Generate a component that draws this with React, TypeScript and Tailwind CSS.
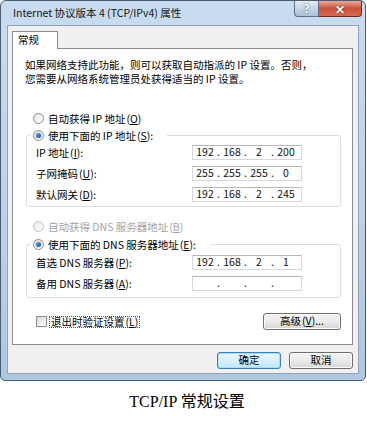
const UI_FONT = "font-['Noto_Sans_CJK_SC','Noto_Sans',sans-serif]";

function Radio({ checked = false, disabled = false }: { checked?: boolean; disabled?: boolean }) {
  return (
    <span
      className={
        "relative flex h-[11px] w-[11px] shrink-0 items-center justify-center rounded-full border bg-gradient-to-br from-[#e6e6e6] to-[#ffffff] " +
        (disabled ? "border-[#c4c4c4]" : "border-[#8a8a8a]")
      }
    >
      {checked && (
        <span className="h-[5px] w-[5px] rounded-full bg-gradient-to-br from-[#5fa2e4] to-[#1a56a6] shadow-[0_0_1px_#0b3d7a]" />
      )}
    </span>
  );
}

function Mn({ k }: { k: string }) {
  return (
    <span className="ml-[1px]">
      (<span className="underline underline-offset-1">{k}</span>)
    </span>
  );
}

function IpBox({ parts }: { parts: [string, string, string, string] }) {
  return (
    <div className="flex h-[15px] w-[110px] items-center border border-[#d4d8de] border-t-[#b4b8be] bg-white pl-[1px] text-[10.5px] leading-none text-[#111]">
      {parts.map((p, i) => (
        <div key={i} className="flex items-center">
          <span className="w-[22px] text-center">{p}</span>
          {i < 3 && <span className="w-[5px] text-center">.</span>}
        </div>
      ))}
    </div>
  );
}

function Row({ label, parts }: { label: React.ReactNode; parts: [string, string, string, string] }) {
  return (
    <div className="flex h-[15px] items-center">
      <div className="ml-[5px] w-[156px] whitespace-nowrap">{label}</div>
      <IpBox parts={parts} />
    </div>
  );
}

function WinButton({ children, primary = false, className = "" }: { children: React.ReactNode; primary?: boolean; className?: string }) {
  return (
    <button
      className={
        "flex h-[17px] items-center justify-center rounded-[3px] border text-[10.5px] leading-none text-black " +
        (primary
          ? "border-[#3c7fb1] bg-gradient-to-b from-[#eaf6fd] via-[#d9f0fc] to-[#bee6fd] shadow-[inset_0_0_0_1px_#a9dcf6] "
          : "border-[#707070] bg-gradient-to-b from-[#f2f2f2] via-[#ebebeb] to-[#d6d6d6] shadow-[inset_0_0_0_1px_#fcfcfc] ") +
        className
      }
    >
      {children}
    </button>
  );
}

export default function App() {
  return (
    <div className={"h-[422px] w-[367px] bg-white " + UI_FONT}>
      {/* dialog window */}
      <div className="relative flex h-[381px] w-[366px] flex-col rounded-t-[6px] rounded-b-[5px] border border-[#4d5d70] bg-gradient-to-b from-[#c9dcef] via-[#bcd3ea] to-[#aec8e3] px-[6px] pb-[6px]">
        <div className="flex h-[24px] items-center pl-[6px] text-[10.5px] leading-none text-[#141414]">
          Internet 协议版本 4 (TCP/IPv4) 属性
        </div>

        {/* caption buttons */}
        <div className="absolute right-[3px] top-0 flex">
          <div className="flex h-[16px] w-[25px] items-center justify-center rounded-bl-[4px] border border-t-0 border-[#5f7189] bg-gradient-to-b from-[#e3ecf6] via-[#c4d5e8] to-[#aebfd4] text-[11px] font-bold leading-none text-white [text-shadow:0_0_2px_#34465e]">
            ?
          </div>
          <div className="flex h-[16px] w-[43px] items-center justify-center rounded-br-[4px] border border-l-0 border-t-0 border-[#6e2a1c] bg-gradient-to-b from-[#e9a898] via-[#c8513a] to-[#d86a4d] text-[12px] font-bold leading-none text-white [text-shadow:0_0_2px_#5a1a0e]">
            ✕
          </div>
        </div>

        {/* client area */}
        <div className="flex flex-1 flex-col border border-[#8ea3ba] bg-[#f0f0f0] px-[4px] pt-[5px]">
          <div className="relative z-10 -mb-px flex h-[18px] w-[46px] items-center border border-b-0 border-[#898c95] bg-white pl-[5px] text-[10.5px] leading-none">
            常规
          </div>

          <div className="flex h-[297px] w-[341px] flex-col border border-[#898c95] bg-white text-[10.5px] leading-[13px] text-black">
            <div className="pl-[12px] pt-[9px] leading-[14px]">
              <div>如果网络支持此功能，则可以获取自动指派的 IP 设置。否则，</div>
              <div>您需要从网络系统管理员处获得适当的 IP 设置。</div>
            </div>

            <div className="mt-[25px] flex h-[14px] items-center gap-[4px] pl-[20px]">
              <Radio />
              <span>
                自动获得 IP 地址<Mn k="O" />
              </span>
            </div>

            <fieldset className="ml-[13px] mr-[11px] mt-[3px] rounded-[3px] border border-[#d5dfe5] px-[4px] pb-[4px]">
              <legend className="flex h-[14px] items-center gap-[4px] pl-[2px] pr-[14px]">
                <Radio checked />
                <span>
                  使用下面的 IP 地址<Mn k="S" />:
                </span>
              </legend>
              <div className="mt-[3px] flex flex-col gap-[6px]">
                <Row label={<>IP 地址<Mn k="I" />:</>} parts={["192", "168", "2", "200"]} />
                <Row label={<>子网掩码<Mn k="U" />:</>} parts={["255", "255", "255", "0"]} />
                <Row label={<>默认网关<Mn k="D" />:</>} parts={["192", "168", "2", "245"]} />
              </div>
            </fieldset>

            <div className="mt-[12px] flex h-[14px] items-center gap-[4px] pl-[20px] text-[#a3a3a3]">
              <Radio disabled />
              <span>
                自动获得 DNS 服务器地址<Mn k="B" />
              </span>
            </div>

            <fieldset className="ml-[13px] mr-[11px] mt-[4px] rounded-[3px] border border-[#d5dfe5] px-[4px] pb-[6px]">
              <legend className="flex h-[14px] items-center gap-[4px] pl-[2px] pr-[14px]">
                <Radio checked />
                <span>
                  使用下面的 DNS 服务器地址<Mn k="E" />:
                </span>
              </legend>
              <div className="mt-[4px] flex flex-col gap-[6px]">
                <Row label={<>首选 DNS 服务器<Mn k="P" />:</>} parts={["192", "168", "2", "1"]} />
                <Row label={<>备用 DNS 服务器<Mn k="A" />:</>} parts={["", "", "", ""]} />
              </div>
            </fieldset>

            <div className="mt-[15px] flex h-[17px] items-center justify-between pl-[23px] pr-[11px]">
              <div className="flex items-center gap-[2px]">
                <span className="h-[11px] w-[11px] border border-[#8e8f8f] bg-gradient-to-br from-[#dcdcdc] to-[#f8f8f8]" />
                <span className="border border-dotted border-[#555] px-[1px] leading-[10px]">
                  退出时验证设置<Mn k="L" />
                </span>
              </div>
              <WinButton className="w-[78px]">
                高级<Mn k="V" />...
              </WinButton>
            </div>
          </div>

          <div className="mt-[7px] flex w-[341px] justify-end gap-[8px]">
            <WinButton primary className="w-[64px]">
              确定
            </WinButton>
            <WinButton className="w-[64px]">取消</WinButton>
          </div>
        </div>
      </div>

      <div className="flex h-[41px] items-center justify-center pl-[7px] font-['Liberation_Serif','Noto_Sans_CJK_SC',serif] text-[16px] leading-none text-black">
        TCP/IP 常规设置
      </div>
    </div>
  );
}
